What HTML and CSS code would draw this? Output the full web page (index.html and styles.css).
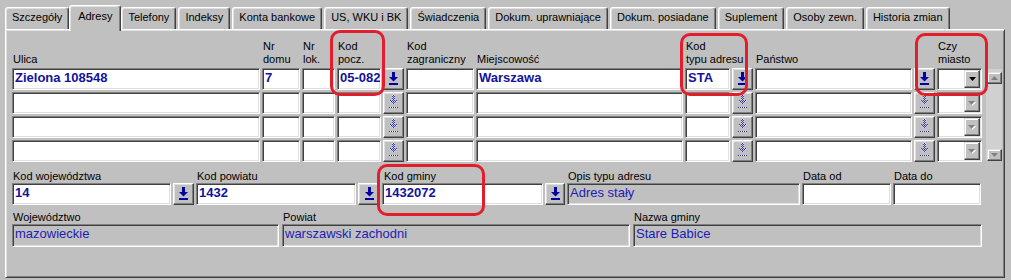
FILE: index.html
```html
<!DOCTYPE html>
<html lang="pl">
<head>
<meta charset="utf-8">
<title>Adresy</title>
<link rel="stylesheet" href="styles.css">
</head>
<body>
<div class="screen">
  <div class="tabs">
    <div class="tab">Szczegóły</div>
    <div class="tab active">Adresy</div>
    <div class="tab">Telefony</div>
    <div class="tab">Indeksy</div>
    <div class="tab">Konta bankowe</div>
    <div class="tab">US, WKU i BK</div>
    <div class="tab">Świadczenia</div>
    <div class="tab">Dokum. uprawniające</div>
    <div class="tab">Dokum. posiadane</div>
    <div class="tab">Suplement</div>
    <div class="tab">Osoby zewn.</div>
    <div class="tab">Historia zmian</div>
  </div>

  <div class="panel">
    <div class="addr-grid">
      <div class="vscroll">
        <div class="sbtn"><svg width="7" height="4" viewBox="0 0 7 4"><polygon points="3.5,0 7,4 0,4" fill="#808080"/></svg></div>
        <div class="track"></div>
        <div class="sbtn"><svg width="7" height="4" viewBox="0 0 7 4"><polygon points="0,0 7,0 3.5,4" fill="#808080"/></svg></div>
      </div>

      <div class="hdr">Ulica</div>
      <div class="hdr">Nr<br>domu</div>
      <div class="hdr">Nr<br>lok.</div>
      <div class="hdr">Kod<br>pocz.</div>
      <div class="hdr"></div>
      <div class="hdr">Kod<br>zagraniczny</div>
      <div class="hdr">Miejscowość</div>
      <div class="hdr">Kod<br>typu adresu</div>
      <div class="hdr"></div>
      <div class="hdr">Państwo</div>
      <div class="hdr"></div>
      <div class="hdr">Czy<br>miasto</div>
      <div class="hdr"></div>

      <!-- row 1 -->
      <div class="fld val">Zielona 108548</div>
      <div class="fld val">7</div>
      <div class="fld"></div>
      <div class="fld val">05-082</div>
      <div class="btn"><svg class="arrow" width="9" height="13" viewBox="0 0 9 13"><rect x="3" y="0" width="3" height="5" fill="#0000a8"/><polygon points="0,5 9,5 4.5,9.5" fill="#0000a8"/><rect x="0" y="11" width="9" height="2" fill="#0000a8"/></svg></div>
      <div class="fld"></div>
      <div class="fld val">Warszawa</div>
      <div class="fld val">STA</div>
      <div class="btn"><svg class="arrow" width="9" height="13" viewBox="0 0 9 13"><rect x="3" y="0" width="3" height="5" fill="#0000a8"/><polygon points="0,5 9,5 4.5,9.5" fill="#0000a8"/><rect x="0" y="11" width="9" height="2" fill="#0000a8"/></svg></div>
      <div class="fld"></div>
      <div class="btn"><svg class="arrow" width="9" height="13" viewBox="0 0 9 13"><rect x="3" y="0" width="3" height="5" fill="#0000a8"/><polygon points="0,5 9,5 4.5,9.5" fill="#0000a8"/><rect x="0" y="11" width="9" height="2" fill="#0000a8"/></svg></div>
      <div class="combo"><span class="drop"><svg width="7" height="4" viewBox="0 0 7 4"><polygon points="0,0 7,0 3.5,4" fill="#000"/></svg></span></div>

      <!-- row 2 -->
      <div class="fld"></div>
      <div class="fld"></div>
      <div class="fld"></div>
      <div class="fld"></div>
      <div class="btn"><svg class="arrow" width="9" height="14" viewBox="0 0 9 14" shape-rendering="crispEdges"><defs><pattern id="d1" width="2" height="2" patternUnits="userSpaceOnUse"><rect width="1" height="1" fill="#2a2ab8"/><rect x="1" y="1" width="1" height="1" fill="#3c3cc8"/><rect x="1" y="0" width="1" height="1" fill="#e8e8f4"/></pattern></defs><rect x="3" y="0" width="3" height="5" fill="url(#d1)"/><polygon points="0,5 9,5 4.5,10" fill="url(#d1)"/><rect x="0" y="12" width="9" height="1" fill="url(#d1)"/></svg></div>
      <div class="fld"></div>
      <div class="fld"></div>
      <div class="fld"></div>
      <div class="btn"><svg class="arrow" width="9" height="14" viewBox="0 0 9 14" shape-rendering="crispEdges"><defs><pattern id="d2" width="2" height="2" patternUnits="userSpaceOnUse"><rect width="1" height="1" fill="#2a2ab8"/><rect x="1" y="1" width="1" height="1" fill="#3c3cc8"/><rect x="1" y="0" width="1" height="1" fill="#e8e8f4"/></pattern></defs><rect x="3" y="0" width="3" height="5" fill="url(#d2)"/><polygon points="0,5 9,5 4.5,10" fill="url(#d2)"/><rect x="0" y="12" width="9" height="1" fill="url(#d2)"/></svg></div>
      <div class="fld"></div>
      <div class="btn"><svg class="arrow" width="9" height="14" viewBox="0 0 9 14" shape-rendering="crispEdges"><defs><pattern id="d3" width="2" height="2" patternUnits="userSpaceOnUse"><rect width="1" height="1" fill="#2a2ab8"/><rect x="1" y="1" width="1" height="1" fill="#3c3cc8"/><rect x="1" y="0" width="1" height="1" fill="#e8e8f4"/></pattern></defs><rect x="3" y="0" width="3" height="5" fill="url(#d3)"/><polygon points="0,5 9,5 4.5,10" fill="url(#d3)"/><rect x="0" y="12" width="9" height="1" fill="url(#d3)"/></svg></div>
      <div class="combo"><span class="drop"><svg width="8" height="5" viewBox="0 0 8 5"><polygon points="1,1 8,1 4.5,5" fill="#fff"/><polygon points="0,0 7,0 3.5,4" fill="#808080"/></svg></span></div>

      <!-- row 3 -->
      <div class="fld"></div>
      <div class="fld"></div>
      <div class="fld"></div>
      <div class="fld"></div>
      <div class="btn"><svg class="arrow" width="9" height="14" viewBox="0 0 9 14" shape-rendering="crispEdges"><defs><pattern id="d4" width="2" height="2" patternUnits="userSpaceOnUse"><rect width="1" height="1" fill="#2a2ab8"/><rect x="1" y="1" width="1" height="1" fill="#3c3cc8"/><rect x="1" y="0" width="1" height="1" fill="#e8e8f4"/></pattern></defs><rect x="3" y="0" width="3" height="5" fill="url(#d4)"/><polygon points="0,5 9,5 4.5,10" fill="url(#d4)"/><rect x="0" y="12" width="9" height="1" fill="url(#d4)"/></svg></div>
      <div class="fld"></div>
      <div class="fld"></div>
      <div class="fld"></div>
      <div class="btn"><svg class="arrow" width="9" height="14" viewBox="0 0 9 14" shape-rendering="crispEdges"><defs><pattern id="d5" width="2" height="2" patternUnits="userSpaceOnUse"><rect width="1" height="1" fill="#2a2ab8"/><rect x="1" y="1" width="1" height="1" fill="#3c3cc8"/><rect x="1" y="0" width="1" height="1" fill="#e8e8f4"/></pattern></defs><rect x="3" y="0" width="3" height="5" fill="url(#d5)"/><polygon points="0,5 9,5 4.5,10" fill="url(#d5)"/><rect x="0" y="12" width="9" height="1" fill="url(#d5)"/></svg></div>
      <div class="fld"></div>
      <div class="btn"><svg class="arrow" width="9" height="14" viewBox="0 0 9 14" shape-rendering="crispEdges"><defs><pattern id="d6" width="2" height="2" patternUnits="userSpaceOnUse"><rect width="1" height="1" fill="#2a2ab8"/><rect x="1" y="1" width="1" height="1" fill="#3c3cc8"/><rect x="1" y="0" width="1" height="1" fill="#e8e8f4"/></pattern></defs><rect x="3" y="0" width="3" height="5" fill="url(#d6)"/><polygon points="0,5 9,5 4.5,10" fill="url(#d6)"/><rect x="0" y="12" width="9" height="1" fill="url(#d6)"/></svg></div>
      <div class="combo"><span class="drop"><svg width="8" height="5" viewBox="0 0 8 5"><polygon points="1,1 8,1 4.5,5" fill="#fff"/><polygon points="0,0 7,0 3.5,4" fill="#808080"/></svg></span></div>

      <!-- row 4 -->
      <div class="fld"></div>
      <div class="fld"></div>
      <div class="fld"></div>
      <div class="fld"></div>
      <div class="btn"><svg class="arrow" width="9" height="14" viewBox="0 0 9 14" shape-rendering="crispEdges"><defs><pattern id="d7" width="2" height="2" patternUnits="userSpaceOnUse"><rect width="1" height="1" fill="#2a2ab8"/><rect x="1" y="1" width="1" height="1" fill="#3c3cc8"/><rect x="1" y="0" width="1" height="1" fill="#e8e8f4"/></pattern></defs><rect x="3" y="0" width="3" height="5" fill="url(#d7)"/><polygon points="0,5 9,5 4.5,10" fill="url(#d7)"/><rect x="0" y="12" width="9" height="1" fill="url(#d7)"/></svg></div>
      <div class="fld"></div>
      <div class="fld"></div>
      <div class="fld"></div>
      <div class="btn"><svg class="arrow" width="9" height="14" viewBox="0 0 9 14" shape-rendering="crispEdges"><defs><pattern id="d8" width="2" height="2" patternUnits="userSpaceOnUse"><rect width="1" height="1" fill="#2a2ab8"/><rect x="1" y="1" width="1" height="1" fill="#3c3cc8"/><rect x="1" y="0" width="1" height="1" fill="#e8e8f4"/></pattern></defs><rect x="3" y="0" width="3" height="5" fill="url(#d8)"/><polygon points="0,5 9,5 4.5,10" fill="url(#d8)"/><rect x="0" y="12" width="9" height="1" fill="url(#d8)"/></svg></div>
      <div class="fld"></div>
      <div class="btn"><svg class="arrow" width="9" height="14" viewBox="0 0 9 14" shape-rendering="crispEdges"><defs><pattern id="d9" width="2" height="2" patternUnits="userSpaceOnUse"><rect width="1" height="1" fill="#2a2ab8"/><rect x="1" y="1" width="1" height="1" fill="#3c3cc8"/><rect x="1" y="0" width="1" height="1" fill="#e8e8f4"/></pattern></defs><rect x="3" y="0" width="3" height="5" fill="url(#d9)"/><polygon points="0,5 9,5 4.5,10" fill="url(#d9)"/><rect x="0" y="12" width="9" height="1" fill="url(#d9)"/></svg></div>
      <div class="combo"><span class="drop"><svg width="8" height="5" viewBox="0 0 8 5"><polygon points="1,1 8,1 4.5,5" fill="#fff"/><polygon points="0,0 7,0 3.5,4" fill="#808080"/></svg></span></div>
    </div>

    <div class="codes">
      <div class="lbl">Kod województwa</div>
      <div class="lbl"></div>
      <div class="lbl">Kod powiatu</div>
      <div class="lbl"></div>
      <div class="lbl gm">Kod gminy</div>
      <div class="lbl"></div>
      <div class="lbl">Opis typu adresu</div>
      <div class="lbl">Data od</div>
      <div class="lbl">Data do</div>

      <div class="fld val">14</div>
      <div class="btn"><svg class="arrow" width="9" height="13" viewBox="0 0 9 13"><rect x="3" y="0" width="3" height="5" fill="#0000a8"/><polygon points="0,5 9,5 4.5,9.5" fill="#0000a8"/><rect x="0" y="11" width="9" height="2" fill="#0000a8"/></svg></div>
      <div class="fld val">1432</div>
      <div class="btn"><svg class="arrow" width="9" height="13" viewBox="0 0 9 13"><rect x="3" y="0" width="3" height="5" fill="#0000a8"/><polygon points="0,5 9,5 4.5,9.5" fill="#0000a8"/><rect x="0" y="11" width="9" height="2" fill="#0000a8"/></svg></div>
      <div class="fld val">1432072</div>
      <div class="btn"><svg class="arrow" width="9" height="13" viewBox="0 0 9 13"><rect x="3" y="0" width="3" height="5" fill="#0000a8"/><polygon points="0,5 9,5 4.5,9.5" fill="#0000a8"/><rect x="0" y="11" width="9" height="2" fill="#0000a8"/></svg></div>
      <div class="fld ro">Adres stały</div>
      <div class="fld"></div>
      <div class="fld"></div>
    </div>

    <div class="names">
      <div class="lbl">Województwo</div>
      <div class="lbl">Powiat</div>
      <div class="lbl">Nazwa gminy</div>
      <div class="fld ro">mazowieckie</div>
      <div class="fld ro">warszawski zachodni</div>
      <div class="fld ro">Stare Babice</div>
    </div>
  </div>

  <div class="mark mark-pocz"></div>
  <div class="mark mark-typ"></div>
  <div class="mark mark-miasto"></div>
  <div class="mark mark-gmina"></div>
</div>
</body>
</html>
```

FILE: styles.css
```css
html, body {
  margin: 0;
  padding: 0;
  background: #c0c0c0;
}

body {
  font-family: "Liberation Sans", Arial, sans-serif;
  font-size: 11px;
  line-height: 13px;
  color: #000;
}

.screen {
  position: relative;
  width: 1011px;
  height: 280px;
  overflow: hidden;
}

/* ---------- tabs ---------- */
.tabs {
  display: flex;
  align-items: flex-end;
  height: 29px;
  padding-left: 5px;
  box-sizing: border-box;
}

.tab {
  position: relative;
  height: 22px;
  box-sizing: border-box;
  padding: 3px 6px 0;
  margin-right: 2px;
  border: 1px solid #fff;
  border-right-color: #404040;
  border-bottom: none;
  border-radius: 3px 3px 0 0;
  box-shadow: inset -1px 0 0 #808080, inset 1px 1px 0 #dfdfdf;
  white-space: nowrap;
  background: #c0c0c0;
}

.tab.active {
  z-index: 2;
  height: 26px;
  margin: 0 0 -2px -2px;
  padding: 4px 8px 0;
}

/* ---------- panel ---------- */
.panel {
  margin-left: 5px;
  width: 1000px;
  height: 249px;
  box-sizing: border-box;
  border: 1px solid;
  border-color: #fff #404040 #404040 #fff;
  box-shadow: inset 1px 1px 0 #dfdfdf, inset -1px -1px 0 #808080;
  padding: 10px 0 0 6px;
}

/* generic 3D controls */
.fld {
  height: 22px;
  box-sizing: border-box;
  border: 1px solid;
  border-color: #808080 #fff #fff #808080;
  box-shadow: inset 1px 1px 0 #404040, inset -1px -1px 0 #dfdfdf;
  background: #fff;
  padding: 1px 0 0 2px;
  font-size: 13px;
  line-height: 15px;
  color: #1818a8;
  white-space: nowrap;
  overflow: hidden;
}

.fld.val {
  font-weight: bold;
  color: #12129c;
}

.fld.ro {
  background: #c0c0c0;
  color: #1c1cb4;
}

.btn {
  height: 22px;
  box-sizing: border-box;
  border: 1px solid;
  border-color: #fff #404040 #404040 #fff;
  box-shadow: inset -1px -1px 0 #808080, inset 1px 1px 0 #dfdfdf;
  background: #c0c0c0;
  display: flex;
  align-items: center;
  justify-content: center;
}

.btn .arrow {
  display: block;
  margin-top: -2px;
}

/* ---------- address grid ---------- */
.addr-grid {
  display: grid;
  grid-template-columns: 248px 38px 33px 44px 21px 68px 207px 45px 21px 157px 21px 45px 19px;
  grid-template-rows: 26px repeat(4, 22px);
  column-gap: 2px;
  row-gap: 2px;
}

.hdr {
  align-self: end;
  padding-left: 1px;
  white-space: nowrap;
}

.combo {
  height: 22px;
  box-sizing: border-box;
  border: 1px solid;
  border-color: #808080 #fff #fff #808080;
  box-shadow: inset 1px 1px 0 #404040, inset -1px -1px 0 #dfdfdf;
  background: #fff;
  display: flex;
  justify-content: flex-end;
  padding: 1px 1px 1px 0;
}

.drop {
  width: 16px;
  height: 18px;
  box-sizing: border-box;
  border: 1px solid;
  border-color: #dfdfdf #404040 #404040 #dfdfdf;
  box-shadow: inset -1px -1px 0 #808080, inset 1px 1px 0 #fff;
  background: #c0c0c0;
  display: flex;
  align-items: center;
  justify-content: center;
}

.drop svg { display: block; }

.vscroll {
  grid-column: 13;
  grid-row: 2 / span 4;
  margin-left: 1px;
  display: flex;
  flex-direction: column;
  background: #d0d0d0;
  border: 1px solid #c0c0c0;
  box-sizing: border-box;
  width: 18px;
  padding: 3px 0 0 1px;
}

.sbtn {
  width: 15px;
  height: 12px;
  box-sizing: border-box;
  border: 1px solid;
  border-color: #dfdfdf #404040 #404040 #dfdfdf;
  box-shadow: inset -1px -1px 0 #808080, inset 1px 1px 0 #fff;
  background: #c0c0c0;
  display: flex;
  align-items: center;
  justify-content: center;
}

.sbtn svg { display: block; }

.track { flex: 1; }

/* ---------- bottom rows ---------- */
.codes {
  display: grid;
  grid-template-columns: 159px 21px 160px 22px 161px 20px 233px 89px 88px;
  grid-template-rows: 13px 22px;
  column-gap: 2px;
  margin-top: 8px;
}

.codes .lbl.gm { padding-left: 2px; }

.names {
  display: grid;
  grid-template-columns: 267px 348px 349px;
  grid-template-rows: 13px 23px;
  column-gap: 3px;
  margin-top: 6px;
}

.names .fld { height: 23px; }

.lbl {
  padding-left: 1px;
  white-space: nowrap;
}

/* ---------- red annotation marks ---------- */
.mark {
  position: absolute;
  border: 3px solid #e21e2c;
  border-radius: 10px;
  box-sizing: border-box;
  pointer-events: none;
  z-index: 5;
}

.mark-pocz   { left: 330px; top: 30px; width: 55px; height: 66px; }
.mark-typ    { left: 680px; top: 33px; width: 68px; height: 63px; }
.mark-miasto { left: 915px; top: 33px; width: 73px; height: 63px; }
.mark-gmina  { left: 377px; top: 164px; width: 108px; height: 52px; }
```
